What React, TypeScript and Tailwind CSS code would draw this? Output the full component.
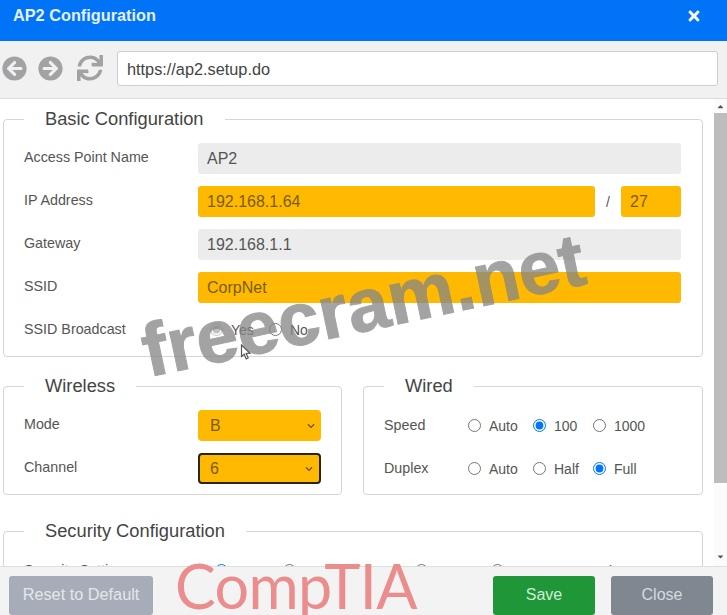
import React from "react";
import { FaArrowCircleLeft, FaArrowCircleRight, FaSync, FaTimes, FaCaretUp, FaCaretDown, FaChevronDown } from "react-icons/fa";

const Field = ({ label, children }: { label: string; children: React.ReactNode }) => (
  <div className="flex items-center h-[31px]">
    <label className="w-[174px] shrink-0 pb-[2px] text-[#555] text-[14.3px]">{label}</label>
    <div className="flex-1 flex items-center">{children}</div>
  </div>
);

const Box = ({ value, amber, className }: { value: string; amber?: boolean; className?: string }) => (
  <div
    className={`h-[31px] rounded-[3px] px-[9px] flex items-center text-base ${
      amber ? "bg-[#ffb900] text-[#7a5c0c]" : "bg-[#ececec] text-[#555]"
    } ${className}`}
  >
    {value}
  </div>
);

const Select = ({ value, focused }: { value: string; focused?: boolean }) => (
  <div
    className={`w-[123px] shrink-0 h-[31px] rounded-[4px] bg-[#ffb900] flex items-center justify-between pr-[6px] text-base text-[#7a5c0c] ${
      focused ? "border-2 border-[#2b2410] pl-[10px]" : "pl-3"
    }`}
  >
    <span>{value}</span>
    <FaChevronDown className="text-[8px] text-[#6b5320]" />
  </div>
);

const Radio = ({ label, checked, className, inputClass }: { label: string; checked?: boolean; className?: string; inputClass?: string }) => (
  <label className={`flex items-center gap-2 text-sm text-[#555] ${className}`}>
    <input type="radio" readOnly checked={!!checked} className={`m-0 w-[13px] h-[13px] accent-[#0075ff] ${inputClass}`} />
    {label}
  </label>
);

const Panel = ({ title, className, children }: { title: string; className?: string; children: React.ReactNode }) => (
  <fieldset className={`min-w-0 border border-[#d6d6d6] rounded-[4px] pl-5 pr-[21px] ${className}`}>
    <legend className="px-[21px] text-[18.3px] leading-7 text-[#444]">{title}</legend>
    {children}
  </fieldset>
);

export default function App() {
  return (
    <div className="relative w-[727px] h-[615px] flex flex-col overflow-hidden bg-white font-['Liberation_Sans',Arial,sans-serif]">
      <header className="h-[41px] shrink-0 bg-[#0073f7] flex items-start justify-between pt-[5px] pl-[13px] pr-[25px] text-white">
        <h1 className="text-[16.3px] leading-5 font-bold text-[#e3f0ff]">AP2 Configuration</h1>
        <FaTimes className="mt-[3px] text-base" />
      </header>

      <div className="h-[58px] shrink-0 bg-[#f1f1f1] border-b border-[#dcdcdc] flex items-center pl-[2px] pr-[9px] pb-[3px] text-[#a2a2a4]">
        <FaArrowCircleLeft className="text-[25px]" />
        <FaArrowCircleRight className="text-[25px] ml-[11px]" />
        <FaSync className="text-[26px] ml-[14px]" />
        <div className="ml-[14px] flex-1 h-[35px] bg-white border border-[#cfcdcd] rounded-[3px] flex items-center pt-[2px] px-[9px] text-[16.3px] text-[#444]">
          https://ap2.setup.do
        </div>
      </div>

      <div className="flex-1 flex min-h-0">
        <main className="flex-1 overflow-hidden pt-[6px] pl-[3px] pr-[11px]">
          <Panel title="Basic Configuration" className="pt-[10px] h-[252px]">
            <div className="flex flex-col gap-[12px]">
              <Field label="Access Point Name">
                <Box value="AP2" className="w-full" />
              </Field>
              <Field label="IP Address">
                <Box value="192.168.1.64" amber className="w-[397px]" />
                <span className="w-[26px] text-center text-sm text-[#555]">/</span>
                <Box value="27" amber className="w-[60px]" />
              </Field>
              <Field label="Gateway">
                <Box value="192.168.1.1" className="w-full" />
              </Field>
              <Field label="SSID">
                <Box value="CorpNet" amber className="w-full" />
              </Field>
              <Field label="SSID Broadcast">
                <div className="flex pb-[2px]">
                  <Radio label="Yes" checked className="w-[71px] pl-[12px]" inputClass="opacity-40 grayscale" />
                  <Radio label="No" />
                </div>
              </Field>
            </div>
          </Panel>

          <div className="flex gap-[21px] mt-[15px]">
            <Panel title="Wireless" className="w-[339px] shrink-0 h-[123px] pt-[10px]">
              <div className="flex flex-col gap-[12px]">
                <Field label="Mode">
                  <Select value="B" />
                </Field>
                <Field label="Channel">
                  <Select value="6" focused />
                </Field>
              </div>
            </Panel>
            <Panel title="Wired" className="flex-1 h-[123px] pt-[10px]">
              <div className="flex flex-col gap-[12px]">
                <div className="flex items-center h-[31px]">
                  <label className="w-[84px] text-[14.3px] text-[#555]">Speed</label>
                  <Radio label="Auto" className="w-[65px]" />
                  <Radio label="100" checked className="w-[60px]" />
                  <Radio label="1000" />
                </div>
                <div className="flex items-center h-[31px]">
                  <label className="w-[84px] text-[14.3px] text-[#555]">Duplex</label>
                  <Radio label="Auto" className="w-[65px]" />
                  <Radio label="Half" className="w-[60px]" />
                  <Radio label="Full" checked />
                </div>
              </div>
            </Panel>
          </div>

          <Panel title="Security Configuration" className="mt-[22px] h-[90px] pt-[15px]">
            <div className="flex items-center">
              <label className="w-[191px] text-[14.3px] text-[#555]">Security Settings</label>
              <Radio label="None" checked className="w-[68px]" />
              <Radio label="WEP" className="w-[67px]" />
              <Radio label="WPA" className="w-[65px]" />
              <Radio label="WPA2" className="w-[76px]" />
              <Radio label="WPA2 - Enterprise" />
            </div>
          </Panel>
        </main>

        <div className="w-[13px] shrink-0 flex flex-col items-center bg-[#fbfbfb] text-[#555]">
          <div className="h-[14px] flex items-center">
            <FaCaretUp className="text-[9px]" />
          </div>
          <div className="w-full h-[370px] bg-[#bdbdbd]" />
          <div className="flex-1 flex items-end pb-[5px]">
            <FaCaretDown className="text-[9px]" />
          </div>
        </div>
      </div>

      <footer className="h-[49px] shrink-0 bg-[#f3f3f3] border-t border-[#dedede] flex items-start pt-[9px] pl-[9px] pr-[14px] relative">
        <button className="w-[144px] h-[39px] pb-[2px] rounded-[3px] bg-[#a6adb8] text-[16.3px] text-[#e4e7ea]">Reset to Default</button>
        <button className="ml-auto w-[102px] h-[39px] pb-[2px] rounded-[3px] bg-[#1f9638] text-base text-[#d3ecd6]">Save</button>
        <button className="ml-[16px] w-[102px] h-[39px] pb-[2px] rounded-[3px] bg-[#7f8790] text-base text-[#d7dade]">Close</button>
      </footer>

      {/* logo and watermark sit over the page */}
      <div className="absolute left-[175px] top-[551px] text-[61px] leading-[70px] font-['Lato',sans-serif] font-normal text-[#ea8d8c] tracking-[-0.6px]">
        CompTIA
      </div>
      <div className="absolute left-[138px] top-[262px] -rotate-[12deg] text-[75px] leading-[86px] font-bold text-[#858585] opacity-75 whitespace-nowrap [-webkit-text-stroke:1px_#858585]">
        freecram.net
      </div>
      <svg className="absolute left-[240px] top-[344px]" width="12" height="17" viewBox="0 0 12 17">
        <path d="M1.5 1 L1.5 12.5 L4.2 10.2 L6.2 15 L8.2 14 L6.2 9.5 L10 9.2 Z" fill="#fff" stroke="#555" strokeWidth="1.2" />
      </svg>
    </div>
  );
}
